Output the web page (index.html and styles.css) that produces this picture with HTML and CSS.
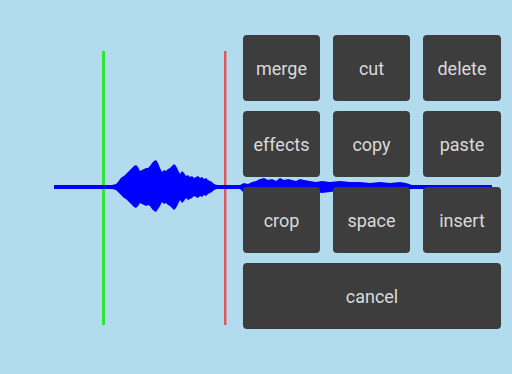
FILE: index.html
```html
<!DOCTYPE html>
<html lang="en">
<head>
    <meta charset="UTF-8">
    <meta name="viewport" content="width=device-width, initial-scale=1.0">
    <title>Wave Editor</title>
    <link rel="stylesheet" href="styles.css">
</head>
<body>
    <div class="stage">
        <!-- waveform canvas with selection markers -->
        <svg class="wave" width="512" height="374" viewBox="0 0 512 374">
            <rect x="102" y="51" width="3" height="274" fill="#2fe63a"/>
            <rect x="224" y="51" width="2.5" height="274" fill="#de5a5e"/>
            <rect x="54" y="185" width="438" height="4" fill="#0000ff"/>
            <polygon fill="#0000ff" points="
                112,185 116,184 118,182 120,179 122,177 124,176 126,174 128,172 130,170 132,168 134,166 136,165
                138,167 140,171 142,170 144,169 146,168 148,168 150,166 152,163 154,161 156,160 158,163 160,168
                162,172 164,170 166,171 168,169 170,168 172,166 174,164 176,166 178,170 180,174 182,171 184,173
                186,176 188,175 190,177 192,176 194,178 196,177 198,176 200,178 202,177 204,179 206,178 208,180
                210,181 212,182 214,184 217,185
                217,189 214,190 212,192 210,193 208,194 206,196 204,195 202,197 200,196 198,198 196,197 194,196
                192,198 190,199 188,200 186,198 184,201 182,203 180,200 178,204 176,208 174,210 172,208 170,206
                168,205 166,203 164,204 162,202 160,206 158,209 156,212 154,211 152,209 150,206 148,205 146,206
                144,205 142,204 140,203 138,206 136,208 134,207 132,205 130,203 128,201 126,199 124,198 122,196
                120,194 118,192 116,190 112,189"/>
            <polygon fill="#0000ff" points="
                240,185 244,183 248,184 252,182 256,181 260,179 264,178 268,180 272,179 276,181 280,178 284,180
                288,179 292,180 296,181 300,179 304,180 310,181 316,182 322,181 330,182 340,181 350,182 360,182
                370,183 380,182 390,183 400,182 406,183 412,185
                412,189 406,190 400,191 390,190 380,191 370,190 360,191 350,192 340,191 330,192 322,193 316,192
                310,193 304,194 300,195 296,193 292,194 288,195 284,194 280,196 276,194 272,195 268,194 264,196
                260,195 256,193 252,194 248,195 244,193 240,189"/>
        </svg>

        <div class="panel">
            <button class="btn">merge</button>
            <button class="btn">cut</button>
            <button class="btn">delete</button>
            <button class="btn">effects</button>
            <button class="btn">copy</button>
            <button class="btn">paste</button>
            <button class="btn">crop</button>
            <button class="btn">space</button>
            <button class="btn">insert</button>
            <button class="btn wide">cancel</button>
        </div>
    </div>
</body>
</html>
```

FILE: styles.css
```css
body {
    margin: 0;
    padding: 0;
    background-color: #b3dbee;
    font-family: 'Roboto', 'Liberation Sans', sans-serif;
}

.stage {
    position: relative;
    width: 512px;
    height: 374px;
    box-sizing: border-box;
    padding: 35px 0 0 243px;
    overflow: hidden;
}

.wave {
    position: absolute;
    left: 0;
    top: 0;
}

.panel {
    position: relative;
    display: grid;
    grid-template-columns: 77px 77px 78px;
    grid-auto-rows: 66px;
    column-gap: 13px;
    row-gap: 10px;
}

.btn {
    background-color: #3d3d3d;
    color: #dadada;
    border: none;
    border-radius: 4px;
    font-family: inherit;
    font-size: 18px;
    padding: 0;
    cursor: pointer;
}

.btn.wide {
    grid-column: 1 / 4;
}
```
